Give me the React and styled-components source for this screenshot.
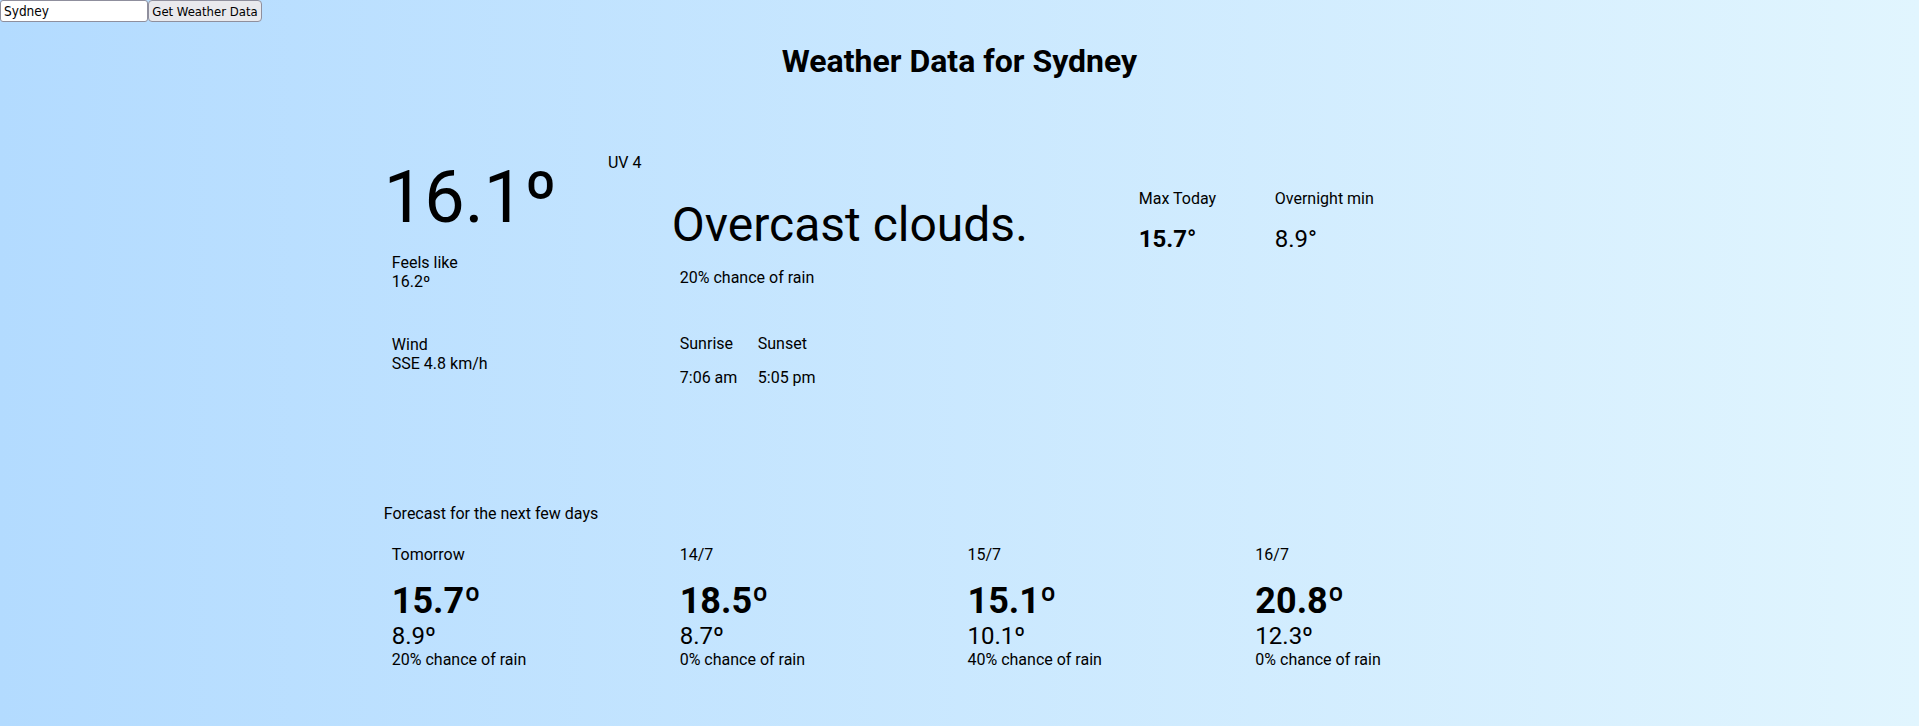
import React from "react";
import styled, { createGlobalStyle } from "styled-components";

const GlobalStyle = createGlobalStyle`
  html, body {
    margin: 0;
    padding: 0;
  }
  body {
    font-family: Roboto, "Liberation Sans", sans-serif;
    color: #000;
  }
`;

const Page = styled.div`
  min-height: 100vh;
  background: linear-gradient(to right, #b3dbff, #e1f5fe);
`;

const SearchBar = styled.form`
  display: flex;
  align-items: flex-start;
  margin: 0;
`;

const CityInput = styled.input`
  box-sizing: border-box;
  width: 148px;
  height: 22px;
  padding: 1px 3px;
  border: 1px solid #8f8f9d;
  border-radius: 3px;
  background: #fff;
  font: 13.5px "DejaVu Sans Condensed", "Liberation Sans", sans-serif;
  color: #000;
`;

const SubmitButton = styled.button`
  box-sizing: border-box;
  width: 114px;
  height: 22px;
  padding: 0;
  border: 1px solid #8f8f9d;
  border-radius: 4px;
  background: #e9e9ed;
  font: 13px "DejaVu Sans Condensed", "Liberation Sans", sans-serif;
  color: #000;
  white-space: nowrap;
`;

const Title = styled.h1`
  font-size: 32px;
  font-weight: 700;
  text-align: center;
  margin: 21px 0 0;
  line-height: 37px;
`;

const Main = styled.main`
  width: 60%;
  margin: 0 auto;
`;

const Current = styled.section`
  display: grid;
  grid-template-columns: 288px 459px 136px 136px;
  margin-top: 73px;
`;

const Column = styled.div`
  display: flex;
  flex-direction: column;
  padding-top: ${(p) => p.$top || 0}px;
`;

const TempRow = styled.div`
  display: flex;
  align-items: flex-start;
  gap: 43px;
`;

const BigTemp = styled.div`
  font-size: 72px;
  line-height: 84px;
  margin-top: 3px;
`;

const Small = styled.div`
  font-size: 16px;
  line-height: 19px;
  padding: 0 8px;
  margin-top: ${(p) => p.$gap || 0}px;
`;

const Description = styled.div`
  font-size: 48px;
  line-height: 56px;
`;

const SunGrid = styled.div`
  display: grid;
  grid-template-columns: 78px 78px;
  row-gap: 15px;
  margin-top: ${(p) => p.$gap || 0}px;
  & > div {
    padding: 0 8px;
    font-size: 16px;
    line-height: 19px;
  }
`;

const Value = styled.div`
  font-size: 24px;
  line-height: 28px;
  font-weight: ${(p) => (p.$bold ? 700 : 400)};
  padding: 0 8px;
  margin-top: 17px;
`;

const Forecast = styled.section`
  margin-top: 117px;
`;

const ForecastHeading = styled.div`
  font-size: 16px;
  line-height: 19px;
`;

const Days = styled.div`
  display: grid;
  grid-template-columns: repeat(4, 1fr);
  margin-top: 22px;
`;

const Day = styled.div`
  padding: 0 8px;
  display: flex;
  flex-direction: column;
`;

const DayLabel = styled.div`
  font-size: 16px;
  line-height: 19px;
`;

const DayHigh = styled.div`
  font-size: 36px;
  font-weight: 700;
  line-height: 42px;
  margin-top: 16px;
`;

const DayLow = styled.div`
  font-size: 24px;
  line-height: 28px;
`;

const days = [
  { label: "Tomorrow", high: "15.7º", low: "8.9º", rain: "20% chance of rain" },
  { label: "14/7", high: "18.5º", low: "8.7º", rain: "0% chance of rain" },
  { label: "15/7", high: "15.1º", low: "10.1º", rain: "40% chance of rain" },
  { label: "16/7", high: "20.8º", low: "12.3º", rain: "0% chance of rain" },
];

export default function App() {
  return (
    <Page>
      <GlobalStyle />
      <SearchBar onSubmit={(e) => e.preventDefault()}>
        <CityInput type="text" defaultValue="Sydney" />
        <SubmitButton type="submit">Get Weather Data</SubmitButton>
      </SearchBar>
      <Title>Weather Data for Sydney</Title>
      <Main>
        <Current>
          <Column>
            <TempRow>
              <BigTemp>16.1º</BigTemp>
              <Small>UV 4</Small>
            </TempRow>
            <Small $gap={13}>
              Feels like
              <br />
              16.2º
            </Small>
            <Small $gap={44}>
              Wind
              <br />
              SSE 4.8 km/h
            </Small>
          </Column>
          <Column $top={44}>
            <Description>Overcast clouds.</Description>
            <Small $gap={15}>20% chance of rain</Small>
            <SunGrid $gap={47}>
              <div>Sunrise</div>
              <div>Sunset</div>
              <div>7:06 am</div>
              <div>5:05 pm</div>
            </SunGrid>
          </Column>
          <Column $top={36}>
            <Small>Max Today</Small>
            <Value $bold>15.7°</Value>
          </Column>
          <Column $top={36}>
            <Small>Overnight min</Small>
            <Value>8.9°</Value>
          </Column>
        </Current>
        <Forecast>
          <ForecastHeading>Forecast for the next few days</ForecastHeading>
          <Days>
            {days.map((d) => (
              <Day key={d.label}>
                <DayLabel>{d.label}</DayLabel>
                <DayHigh>{d.high}</DayHigh>
                <DayLow>{d.low}</DayLow>
                <DayLabel>{d.rain}</DayLabel>
              </Day>
            ))}
          </Days>
        </Forecast>
      </Main>
    </Page>
  );
}
